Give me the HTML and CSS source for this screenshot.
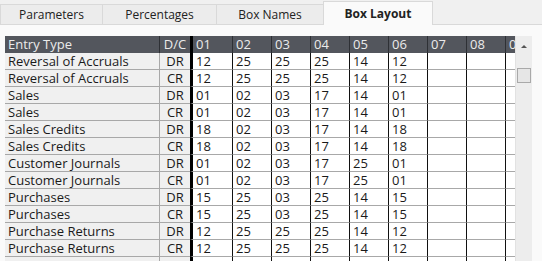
FILE: index.html
```html
<!DOCTYPE html>
<html>
<head>
<meta charset="utf-8">
<link rel="stylesheet" href="styles.css">
</head>
<body>
<div class="tabs">
  <div class="tab t1">Parameters</div>
  <div class="tab t2">Percentages</div>
  <div class="tab t3">Box Names</div>
  <div class="tab active">Box Layout</div>
</div>
<div class="content">
  <div class="grid">
    <div class="view">
      <table>
        <colgroup>
          <col class="c-type"><col class="c-dc"><col class="c-first"><col class="c-n"><col class="c-n"><col class="c-n"><col class="c-n"><col class="c-n"><col class="c-n"><col class="c-n"><col class="c-n">
        </colgroup>
        <thead>
          <tr><th class="type">Entry Type</th><th class="dc">D/C</th><th class="first">01</th><th>02</th><th>03</th><th>04</th><th>05</th><th>06</th><th>07</th><th>08</th><th>09</th></tr>
        </thead>
        <tbody>
          <tr><td class="type">Reversal of Accruals</td><td class="dc">DR</td><td class="first">12</td><td>25</td><td>25</td><td>25</td><td>14</td><td>12</td><td></td><td></td><td></td></tr>
          <tr><td class="type">Reversal of Accruals</td><td class="dc">CR</td><td class="first">12</td><td>25</td><td>25</td><td>25</td><td>14</td><td>12</td><td></td><td></td><td></td></tr>
          <tr><td class="type">Sales</td><td class="dc">DR</td><td class="first">01</td><td>02</td><td>03</td><td>17</td><td>14</td><td>01</td><td></td><td></td><td></td></tr>
          <tr><td class="type">Sales</td><td class="dc">CR</td><td class="first">01</td><td>02</td><td>03</td><td>17</td><td>14</td><td>01</td><td></td><td></td><td></td></tr>
          <tr><td class="type">Sales Credits</td><td class="dc">DR</td><td class="first">18</td><td>02</td><td>03</td><td>17</td><td>14</td><td>18</td><td></td><td></td><td></td></tr>
          <tr><td class="type">Sales Credits</td><td class="dc">CR</td><td class="first">18</td><td>02</td><td>03</td><td>17</td><td>14</td><td>18</td><td></td><td></td><td></td></tr>
          <tr><td class="type">Customer Journals</td><td class="dc">DR</td><td class="first">01</td><td>02</td><td>03</td><td>17</td><td>25</td><td>01</td><td></td><td></td><td></td></tr>
          <tr><td class="type">Customer Journals</td><td class="dc">CR</td><td class="first">01</td><td>02</td><td>03</td><td>17</td><td>25</td><td>01</td><td></td><td></td><td></td></tr>
          <tr><td class="type">Purchases</td><td class="dc">DR</td><td class="first">15</td><td>25</td><td>03</td><td>25</td><td>14</td><td>15</td><td></td><td></td><td></td></tr>
          <tr><td class="type">Purchases</td><td class="dc">CR</td><td class="first">15</td><td>25</td><td>03</td><td>25</td><td>14</td><td>15</td><td></td><td></td><td></td></tr>
          <tr><td class="type">Purchase Returns</td><td class="dc">DR</td><td class="first">12</td><td>25</td><td>25</td><td>25</td><td>14</td><td>12</td><td></td><td></td><td></td></tr>
          <tr><td class="type">Purchase Returns</td><td class="dc">CR</td><td class="first">12</td><td>25</td><td>25</td><td>25</td><td>14</td><td>12</td><td></td><td></td><td></td></tr>
          <tr><td class="type"></td><td class="dc"></td><td class="first"></td><td></td><td></td><td></td><td></td><td></td><td></td><td></td><td></td></tr>
        </tbody>
      </table>
    </div>
    <div class="scrollbar">
      <div class="arrow"></div>
      <div class="thumb"></div>
    </div>
  </div>
</div>
</body>
</html>
```
FILE: styles.css
```css
html, body {
  margin: 0;
  padding: 0;
  width: 542px;
  height: 261px;
  overflow: hidden;
  background: #fafafa;
  font-family: "Open Sans", "Noto Sans", sans-serif;
  font-size: 12px;
  color: #1a1a1a;
}
.tabs {
  display: flex;
  align-items: flex-end;
  height: 25px;
  background: #f0f0f0;
  border-bottom: 1px solid #d9d9d9;
  box-sizing: border-box;
}
.tab {
  height: 20px;
  box-sizing: border-box;
  display: flex;
  align-items: center;
  justify-content: center;
  background: #ececec;
  border: 1px solid #d9d9d9;
  border-bottom: none;
  margin-right: -1px;
  color: #222;
  font-size: 12px;
}
.t1 { width: 103px; }
.t2 { width: 115px; }
.t3 { width: 108px; }
.tab.active {
  width: 110px;
  background: #fafafa;
  font-weight: bold;
  margin-bottom: -1px;
  height: 24px;
  padding-bottom: 1px;
}
.content {
  padding: 11px 0 0 5px;
}
.grid {
  display: flex;
  width: 527px;
  height: 240px;
}
.view {
  width: 510px;
  overflow: hidden;
}
table {
  border-collapse: separate;
  border-spacing: 0;
  table-layout: fixed;
  width: 539px;
  font-size: 13px;
}
.c-type { width: 154px; }
.c-dc { width: 31px; }
.c-first { width: 42px; }
.c-n { width: 39px; }
th, td {
  padding: 0 0 0 3px;
  text-align: left;
  white-space: nowrap;
  overflow: hidden;
  box-sizing: border-box;
}
th {
  height: 17px;
  line-height: 17px;
  background: #53565d;
  color: #ebebeb;
  font-weight: normal;
  border-left: 1px solid #2e3035;
}
th.type { border-left: none; }
td {
  height: 17px;
  line-height: 16px;
  background: #fff;
  border-left: 1px solid #111;
  border-bottom: 1px solid #a8a8a8;
}
td.type {
  background: #f0f0f0;
  border-left: none;
}
td.dc, th.dc {
  text-align: center;
  padding: 0;
}
td.dc {
  background: #f0f0f0;
  border-left: 1px solid #a8a8a8;
}
td.first, th.first {
  border-left: 3px solid #000;
}
.scrollbar {
  width: 17px;
  background: #ededed;
  border-left: 1px solid #e2e2e2;
  box-sizing: border-box;
}
.arrow {
  margin: 9px auto 0;
  width: 0;
  height: 0;
  border-left: 3px solid transparent;
  border-right: 3px solid transparent;
  border-bottom: 3px solid #555;
}
.thumb {
  margin: 20px auto 0;
  width: 14px;
  height: 15px;
  box-sizing: border-box;
  background: #e6e6e6;
  border: 1px solid #a9a9a9;
}
```
